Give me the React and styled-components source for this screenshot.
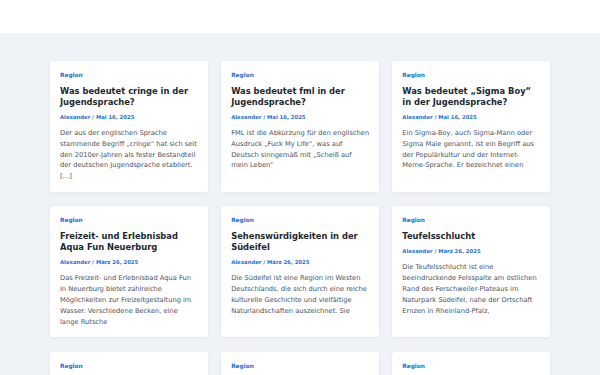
import styled, { createGlobalStyle } from 'styled-components'

const GlobalStyle = createGlobalStyle`
    body {
        margin: 0;
        background: #eff3f7;
        font-family: "DejaVu Sans", Verdana, sans-serif;
    }
`;

const beitraege = [
    {
        titel: 'Was bedeutet cringe in der Jugendsprache?',
        datum: 'Mai 16, 2025',
        text: 'Der aus der englischen Sprache stammende Begriff „cringe“ hat sich seit den 2010er-Jahren als fester Bestandteil der deutschen Jugendsprache etabliert. […]'
    },
    {
        titel: 'Was bedeutet fml in der Jugendsprache?',
        datum: 'Mai 16, 2025',
        text: 'FML ist die Abkürzung für den englischen Ausdruck „Fuck My Life“, was auf Deutsch sinngemäß mit „Scheiß auf mein Leben“'
    },
    {
        titel: 'Was bedeutet „Sigma Boy“ in der Jugendsprache?',
        datum: 'Mai 16, 2025',
        text: 'Ein Sigma-Boy, auch Sigma-Mann oder Sigma Male genannt, ist ein Begriff aus der Populärkultur und der Internet-Meme-Sprache. Er bezeichnet einen'
    },
    {
        titel: 'Freizeit- und Erlebnisbad Aqua Fun Neuerburg',
        datum: 'März 26, 2025',
        text: 'Das Freizeit- und Erlebnisbad Aqua Fun in Neuerburg bietet zahlreiche Möglichkeiten zur Freizeitgestaltung im Wasser. Verschiedene Becken, eine lange Rutsche'
    },
    {
        titel: 'Sehenswürdigkeiten in der Südeifel',
        datum: 'März 26, 2025',
        text: 'Die Südeifel ist eine Region im Westen Deutschlands, die sich durch eine reiche kulturelle Geschichte und vielfältige Naturlandschaften auszeichnet. Sie'
    },
    {
        titel: 'Teufelsschlucht',
        datum: 'März 26, 2025',
        text: 'Die Teufelsschlucht ist eine beeindruckende Felsspalte am östlichen Rand des Ferschweiler-Plateaus im Naturpark Südeifel, nahe der Ortschaft Ernzen in Rheinland-Pfalz,'
    },
    {
        titel: 'Die Burg Ramstein im Kylltal',
        datum: 'März 20, 2025',
        text: 'Die Burg Ramstein liegt malerisch auf einem Felsen über dem Kylltal.'
    },
    {
        titel: 'Wandern in der Eifel',
        datum: 'März 20, 2025',
        text: 'Die Eifel bietet zahlreiche Wanderwege durch Wälder und Täler.'
    },
    {
        titel: 'Die Maare der Vulkaneifel',
        datum: 'März 18, 2025',
        text: 'Die Maare sind vulkanischen Ursprungs und prägen die Landschaft.'
    }
];

export default function App() {
    return (
        <>
            <GlobalStyle />
            <SCKopf />
            <SCInhalt>
                <SCGrid>
                    {beitraege.map((b, i) => (
                        <SCKarte key={i}>
                            <SCKategorie>Region</SCKategorie>
                            <SCTitel>{b.titel}</SCTitel>
                            <SCMeta>Alexander / {b.datum}</SCMeta>
                            <SCText>{b.text}</SCText>
                        </SCKarte>
                    ))}
                </SCGrid>
            </SCInhalt>
        </>
    );
}

const SCKopf = styled.header`
    height: 33px;
    background-color: #FFFFFF;
`;

const SCInhalt = styled.main`
    padding: 28px 0 40px;
`;

const SCGrid = styled.div`
    width: 500px;
    margin: 0 auto;
    display: grid;
    grid-template-columns: repeat(3, 1fr);
    column-gap: 13.5px;
    row-gap: 14.5px;
`;

const SCKarte = styled.article`
    background-color: #FFFFFF;
    border-radius: 3px;
    box-shadow: 0px 1px 4px rgba(30, 50, 80, 0.06);
    padding: 10px 9.2px 10px 10px;
    display: flex;
    flex-direction: column;
`;

const SCKategorie = styled.span`
    font-size: 5.8px;
    line-height: 9px;
    font-weight: 700;
    color: #1b6fd6;
`;

const SCTitel = styled.h2`
    margin: 6px 0 0;
    font-size: 8.35px;
    line-height: 11px;
    font-weight: 700;
    color: #222832;
`;

const SCMeta = styled.span`
    margin-top: 5px;
    font-size: 5.3px;
    line-height: 8px;
    font-weight: 700;
    color: #1b6fd6;
`;

const SCText = styled.p`
    margin: 7px 0 0;
    font-size: 6.7px;
    line-height: 10.8px;
    color: #4b5361;
`;
